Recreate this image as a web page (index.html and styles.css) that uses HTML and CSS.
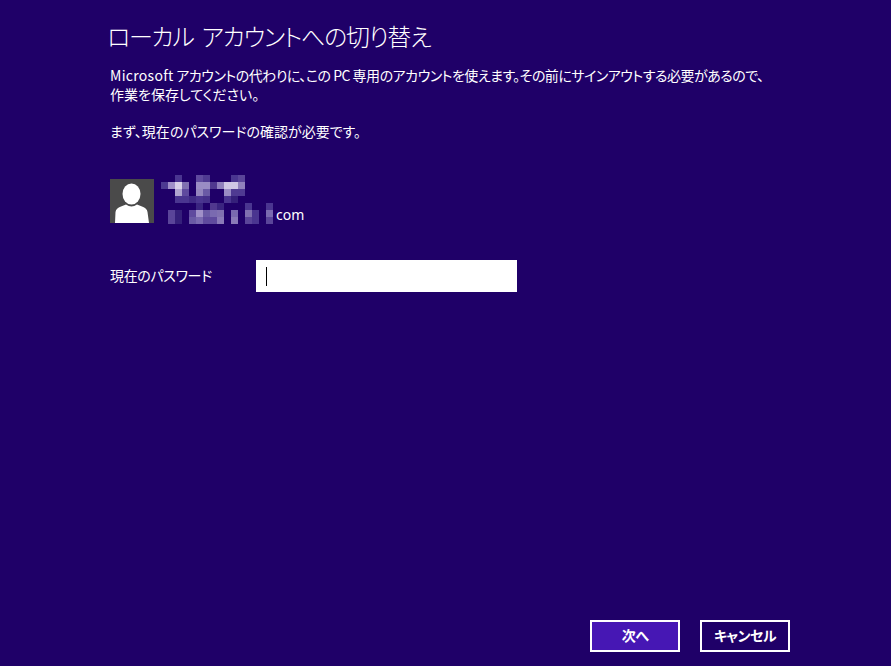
FILE: index.html
```html
<!DOCTYPE html>
<html lang="ja">
<head>
<meta charset="utf-8">
<title>ローカル アカウントへの切り替え</title>
<link rel="stylesheet" href="styles.css">
</head>
<body>
<main class="page">
  <h1 class="title">ローカル アカウントへの切り替え</h1>
  <p class="intro"><span class="intro-lead"><span class="latin">Microsoft</span> アカウントの代わりに、この PC 専用のアカウントを使えます。その前にサインアウトする必要があるので、</span><br>作業を保存してください。</p>
  <p class="note">まず、現在のパスワードの確認が必要です。</p>
  <section class="user">
    <div class="avatar">
      <svg width="44" height="44" viewBox="0 0 44 44"><rect width="44" height="44" fill="#4a4a4a"/><ellipse cx="21.5" cy="15" rx="9" ry="10.5" fill="#fff"/><path d="M5 44 L5.5 33 Q6 29 11 27.5 L16 25.5 Q21.500 29.500 27 25.500 L32 27.500 Q37 29 37.500 33 L39 44 Z" fill="#fff"/></svg>
    </div>
    <div class="mosaic">
      <svg class="blur" width="112" height="49" viewBox="0 0 16 7" shape-rendering="crispEdges">
        <g>
          <rect x="2" y="0" width="1" height="1" fill="#4a3590"/><rect x="5" y="0" width="1" height="1" fill="#5f4a9e"/><rect x="6" y="0" width="1" height="1" fill="#4f3a92"/><rect x="10" y="0" width="1" height="1" fill="#4a3590"/><rect x="11" y="0" width="1" height="1" fill="#5a4599"/>
          <rect x="0" y="1" width="1" height="1" fill="#4d3a92"/><rect x="1" y="1" width="1" height="1" fill="#a090c8"/><rect x="2" y="1" width="1" height="1" fill="#d8d0e8"/><rect x="3" y="1" width="1" height="1" fill="#8070b0"/><rect x="5" y="1" width="1" height="1" fill="#9a8cc4"/><rect x="6" y="1" width="1" height="1" fill="#9a8cc4"/><rect x="7" y="1" width="1" height="1" fill="#50388f"/><rect x="8" y="1" width="1" height="1" fill="#9080bc"/><rect x="9" y="1" width="1" height="1" fill="#cfc6e4"/><rect x="10" y="1" width="1" height="1" fill="#cfc6e4"/><rect x="11" y="1" width="1" height="1" fill="#9080bc"/>
          <rect x="2" y="2" width="1" height="1" fill="#b0a4d0"/><rect x="3" y="2" width="1" height="1" fill="#5f4a9e"/><rect x="5" y="2" width="1" height="1" fill="#9486be"/><rect x="6" y="2" width="1" height="1" fill="#6a5aa5"/><rect x="9" y="2" width="1" height="1" fill="#9a8cc4"/><rect x="10" y="2" width="1" height="1" fill="#4f3a92"/><rect x="11" y="2" width="1" height="1" fill="#4f3a92"/>
          <rect x="2" y="3" width="1" height="1" fill="#4a3590"/><rect x="3" y="3" width="1" height="1" fill="#4a3590"/><rect x="4" y="3" width="1" height="1" fill="#3f2a85"/><rect x="5" y="3" width="1" height="1" fill="#4a3590"/><rect x="6" y="3" width="1" height="1" fill="#45308a"/><rect x="9" y="3" width="1" height="1" fill="#4a3590"/><rect x="10" y="3" width="1" height="1" fill="#35207a"/>
          <rect x="5" y="4" width="1" height="1" fill="#3a2580"/><rect x="7" y="4" width="1" height="1" fill="#50388f"/><rect x="8" y="4" width="1" height="1" fill="#3a2580"/><rect x="12" y="4" width="1" height="1" fill="#4a3590"/><rect x="15" y="4" width="1" height="1" fill="#4a3590"/>
          <rect x="1" y="5" width="1" height="1" fill="#5a4599"/><rect x="2" y="5" width="1" height="1" fill="#35207a"/><rect x="4" y="5" width="1" height="1" fill="#5f4a9e"/><rect x="5" y="5" width="1" height="1" fill="#a090c8"/><rect x="6" y="5" width="1" height="1" fill="#6a5aa5"/><rect x="7" y="5" width="1" height="1" fill="#7a6ab0"/><rect x="8" y="5" width="1" height="1" fill="#8070b0"/><rect x="10" y="5" width="1" height="1" fill="#7a6ab0"/><rect x="12" y="5" width="1" height="1" fill="#8070b0"/><rect x="13" y="5" width="1" height="1" fill="#4a3590"/><rect x="15" y="5" width="1" height="1" fill="#7a6ab0"/>
          <rect x="1" y="6" width="1" height="1" fill="#5a4599"/><rect x="2" y="6" width="1" height="1" fill="#35207a"/><rect x="4" y="6" width="1" height="1" fill="#6a5aa5"/><rect x="5" y="6" width="1" height="1" fill="#7a6ab0"/><rect x="6" y="6" width="1" height="1" fill="#5f4a9e"/><rect x="7" y="6" width="1" height="1" fill="#5f4a9e"/><rect x="8" y="6" width="1" height="1" fill="#8a7ab8"/><rect x="10" y="6" width="1" height="1" fill="#8a7ab8"/><rect x="12" y="6" width="1" height="1" fill="#5a4599"/><rect x="13" y="6" width="1" height="1" fill="#4a3590"/><rect x="15" y="6" width="1" height="1" fill="#5a4599"/>
        </g>
      </svg>
      <span class="domain">com</span>
    </div>
  </section>
  <div class="field">
    <label class="field-label">現在のパスワード</label>
    <div class="input"><span class="caret"></span></div>
  </div>
  <footer class="actions">
    <button class="btn btn-primary">次へ</button>
    <button class="btn">キャンセル</button>
  </footer>
</main>
</body>
</html>
```

FILE: styles.css
```css
html, body {
  margin: 0;
  height: 100%;
  background: #1f0068;
}
body {
  overflow: hidden;
  color: #fff;
  font-family: "Noto Sans CJK JP", "Noto Sans", sans-serif;
  font-feature-settings: "palt";
}
.page {
  box-sizing: border-box;
  height: 666px;
  padding: 20px 101px 14px 110px;
  display: flex;
  flex-direction: column;
}
.title {
  margin: 0 0 0 -3px;
  font-size: 24px;
  line-height: 32px;
  font-weight: 300;
  letter-spacing: -1.3px;
  word-spacing: 4px;
  white-space: nowrap;
}
.intro {
  margin: 14px 0 0;
  font-size: 14px;
  line-height: 19px;
  white-space: nowrap;
}
.intro-lead {
  letter-spacing: -0.5px;
}
.latin {
  letter-spacing: 0.3px;
}
.note {
  margin: 18px 0 0;
  font-size: 14px;
  line-height: 19px;
}
.user {
  margin-top: 29px;
  display: flex;
  align-items: flex-start;
}
.avatar {
  margin-top: 9px;
  width: 44px;
  height: 44px;
}
.avatar svg, .mosaic svg {
  display: block;
}
.mosaic {
  position: relative;
  margin-left: 7px;
  width: 150px;
  height: 54px;
}
.blur {
  margin-top: 5px;
}
.domain {
  position: absolute;
  left: 115px;
  top: 35px;
  font-family: "Noto Sans", sans-serif;
  font-size: 14px;
  line-height: 19px;
}
.field {
  margin-top: 36px;
  display: flex;
  align-items: center;
  height: 32px;
}
.field-label {
  width: 146px;
  font-size: 14px;
  letter-spacing: -0.35px;
  white-space: nowrap;
  padding-bottom: 2px;
}
.input {
  width: 261px;
  height: 32px;
  background: #fff;
  display: flex;
  align-items: center;
  padding-left: 10px;
  box-sizing: border-box;
}
.caret {
  width: 1px;
  height: 19px;
  background: #000;
}
.actions {
  margin-top: auto;
  display: flex;
  justify-content: flex-end;
  gap: 20px;
}
.btn {
  box-sizing: border-box;
  width: 90px;
  height: 32px;
  border: 2.500px solid #fff;
  background: transparent;
  color: #fff;
  font-family: "Noto Sans CJK JP", sans-serif;
  font-feature-settings: "palt";
  font-size: 14px;
  font-weight: 700;
  letter-spacing: -0.5px;
  padding: 0 0 2px;
}
.btn-primary {
  background: #4617b4;
}
```
